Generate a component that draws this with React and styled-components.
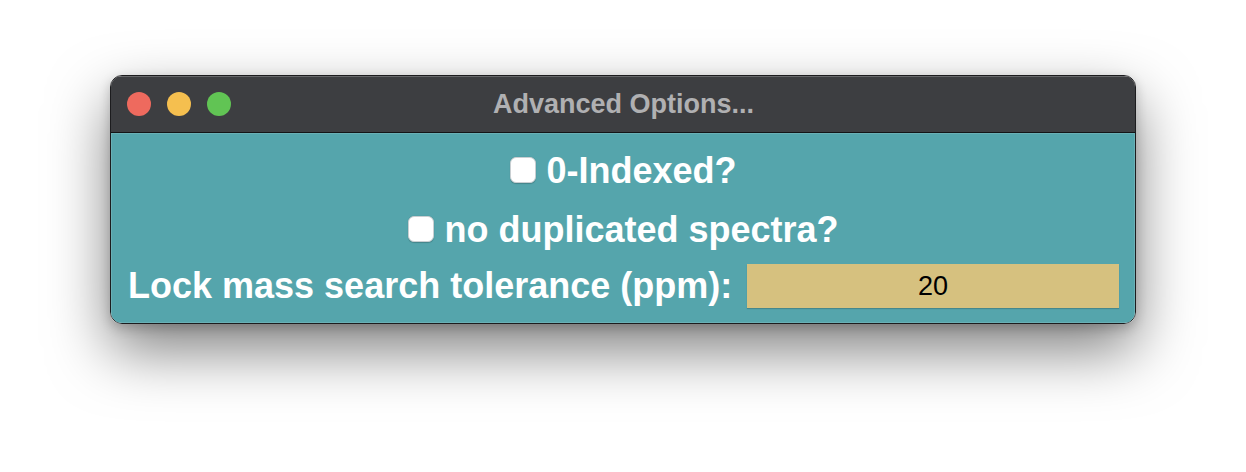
import React, { useState } from 'react';
import styled, { createGlobalStyle } from 'styled-components';

const GlobalStyle = createGlobalStyle`
  html, body {
    margin: 0;
    padding: 0;
    background: #ffffff;
  }
  body {
    font-family: 'Liberation Sans', Arial, sans-serif;
  }
`;

export default function App() {
  const [zeroIndexed, setZeroIndexed] = useState(false);
  const [noDupes, setNoDupes] = useState(false);
  const [tolerance, setTolerance] = useState('20');

  return (
    <Page>
      <GlobalStyle />
      <Window>
        <TitleBar>
          <Lights>
            <Light color='#ee6a5e' />
            <Light color='#f5bf4f' />
            <Light color='#61c454' />
          </Lights>
          <Title>Advanced Options...</Title>
        </TitleBar>
        <Body>
          <CheckRow>
            <Check checked={zeroIndexed} onClick={() => setZeroIndexed(!zeroIndexed)} />
            <Label>0-Indexed?</Label>
          </CheckRow>
          <CheckRow>
            <Check checked={noDupes} onClick={() => setNoDupes(!noDupes)} />
            <Label>no duplicated spectra?</Label>
          </CheckRow>
          <FieldRow>
            <Label>Lock mass search tolerance (ppm):</Label>
            <Entry value={tolerance} onChange={(e) => setTolerance(e.target.value)} />
          </FieldRow>
        </Body>
      </Window>
    </Page>
  );
}

const Page = styled.div`
  width: 1246px;
  height: 472px;
  padding-top: 75px;
  box-sizing: border-box;
  display: flex;
  justify-content: center;
  align-items: flex-start;
`;

const Window = styled.div`
  width: 1024px;
  border: 1px solid #1c1c1e;
  border-radius: 12px;
  overflow: hidden;
  box-shadow: 0 26px 60px rgba(0, 0, 0, 0.5), 0 4px 12px rgba(0, 0, 0, 0.2);
`;

const TitleBar = styled.div`
  position: relative;
  height: 56px;
  background: #3d3e41;
  border-bottom: 1px solid #141416;
  box-shadow: inset 0 1px 0 rgba(255, 255, 255, 0.22);
  display: flex;
  align-items: center;
  justify-content: center;
`;

const Lights = styled.div`
  position: absolute;
  left: 16px;
  top: 16px;
  display: flex;
  gap: 16px;
`;

const Light = styled.span`
  width: 24px;
  height: 24px;
  border-radius: 50%;
  background: ${(p) => p.color};
`;

const Title = styled.div`
  font-size: 27px;
  font-weight: 700;
  color: #b0b0b2;
  margin-top: 1px;
  margin-left: 1px;
`;

const Body = styled.div`
  background: #55a5ac;
  box-shadow: inset 0 0 0 1px rgba(255, 255, 255, 0.12);
  display: flex;
  flex-direction: column;
  align-items: center;
  padding: 17px 16px 15px 17px;
`;

const CheckRow = styled.div`
  height: 42px;
  display: flex;
  align-items: center;
  gap: 10px;
  margin-bottom: 17px;
`;

const Check = styled.span`
  width: 26px;
  height: 26px;
  box-sizing: border-box;
  border-radius: 6px;
  background: ${(p) => (p.checked ? '#2f7cf6' : '#ffffff')};
  border: 1px solid #c9cfd2;
  box-shadow: 0 0.5px 1px rgba(0, 0, 0, 0.2);
  margin-top: -3px;
  cursor: pointer;
`;

const Label = styled.span`
  font-size: 36px;
  font-weight: 700;
  color: #ffffff;
  white-space: nowrap;
  line-height: 42px;
`;

const FieldRow = styled.div`
  align-self: stretch;
  display: flex;
  align-items: center;
  gap: 15px;
  margin-top: -4px;
`;

const Entry = styled.input`
  flex: 1;
  min-width: 0;
  height: 44px;
  box-sizing: border-box;
  border: none;
  outline: none;
  background: #d6c17f;
  box-shadow: 0 1px 1px rgba(0, 0, 0, 0.18);
  font-family: 'Liberation Sans', Arial, sans-serif;
  font-size: 27px;
  color: #000000;
  text-align: center;
  padding: 0;
`;
